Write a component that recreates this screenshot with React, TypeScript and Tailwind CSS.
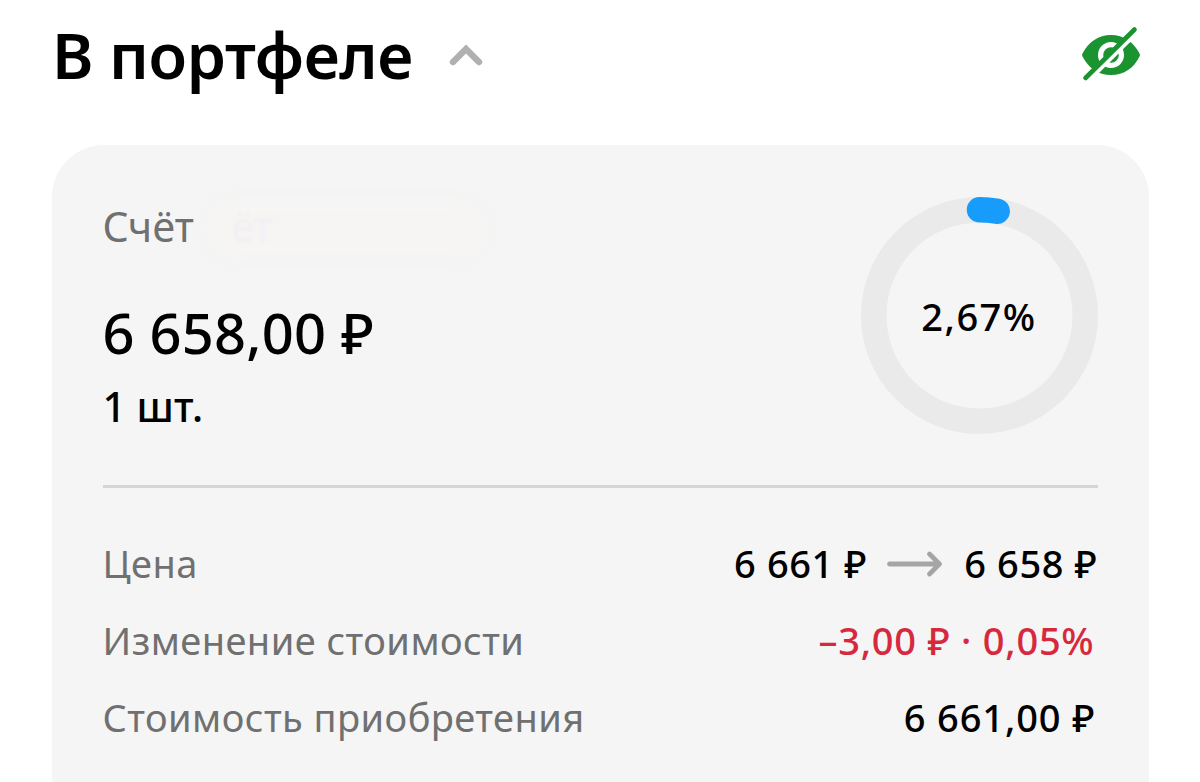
const FONT = { fontFamily: '"Noto Sans", "Open Sans", sans-serif' };

function EyeOff() {
  return (
    <svg width="60" height="54" viewBox="0 0 60 54" className="mt-[27px] shrink-0 overflow-visible">
      <path d="M1.500 26.500C7.500 15 17.500 8 30 8S53 15.500 58.500 26.500Q59.500 28 58.500 29.500C53 41 43 48 30 48S7.500 41 1.500 29.500Q0.500 28 1.500 26.500Z" fill="#1b9330" />
      <circle cx="30" cy="28" r="10.400" fill="#1b9330" stroke="#fff" strokeWidth="5.200" />
      <path d="M6.500 54L58 3" stroke="#fff" strokeWidth="4.600" />
      <path d="M4.500 51L53.500 2.500" stroke="#1b9330" strokeWidth="4.600" strokeLinecap="round" />
    </svg>
  );
}

function ShareRing() {
  return (
    <div className="relative grid size-[237px] shrink-0 place-items-center">
      <svg width="237" height="237" viewBox="0 0 237 237" className="absolute inset-0" fill="none">
        <circle cx="118.500" cy="118.500" r="105.750" stroke="#eaeaea" strokeWidth="25.500" />
        <path d="M118.500 12.750A105.750 105.750 0 0 1 136.200 14.240" stroke="#179cfb" strokeWidth="25.500" strokeLinecap="round" />
      </svg>
      <span className="relative text-[38px] font-medium leading-[52px] tracking-[1.500px]">2,67%</span>
    </div>
  );
}

export default function App() {
  return (
    <div className="flex h-[782px] w-[1200px] flex-col overflow-hidden bg-white text-black" style={FONT}>
      <header className="flex h-[145px] shrink-0 items-start pl-[52px] pr-[59px]">
        <h1 className="whitespace-nowrap text-[63px] font-semibold leading-[109px] tracking-[-0.400px]">В портфеле</h1>
        <svg width="34" height="24" viewBox="0 0 34 24" className="ml-[36px] mt-[43px]" fill="none" stroke="#b0b0b0" strokeWidth="6.500" strokeLinecap="round">
          <path d="M4 19L17 6L30 19" />
        </svg>
        <div className="ml-auto"><EyeOff /></div>
      </header>
      <main className="mx-[51.500px] h-[700px] shrink-0 rounded-[52px] bg-[#f5f5f5] px-[51px]">
        <section className="flex h-[340px] justify-between pt-[52px]">
          <div className="flex flex-col whitespace-nowrap pt-[3px]">
            <div className="relative flex text-[41px] leading-[52px] text-[#707070]">
              <span className="tracking-[0.200px]">Счёт</span>
              <span className="absolute left-[102px] top-0 h-[58px] w-[282px] rounded-full bg-[#f6f5f4] blur-[6px]" />
              <span className="absolute left-[129px] top-0 text-[#f0f0f2] blur-[1px]">ёт</span>
            </div>
            <span className="mt-[46px] text-[56px] font-medium leading-[68px] tracking-[0.200px]">6 658,00 ₽</span>
            <span className="mt-[14px] text-[41px] font-medium leading-[52px]">1 шт.</span>
          </div>
          <ShareRing />
        </section>
        <div className="h-[3px] bg-[#d5d5d5]" />
        <dl className="flex flex-col whitespace-nowrap pt-[37px] text-[38px] leading-[77px]">
          <div className="flex justify-between">
            <dt className="tracking-[0.450px] text-[#707070]">Цена</dt>
            <dd className="flex items-center font-medium tracking-[0.600px]">
              <span>6 661 ₽</span>
              <svg width="56" height="28" viewBox="0 0 56 28" className="ml-[20px] mr-[21px] mt-px" fill="none" stroke="#a5a5a5" strokeWidth="4.800" strokeLinecap="round" strokeLinejoin="round">
                <path d="M2.500 14H52M42.500 4L52.500 14L42.500 24" />
              </svg>
              <span>6 658 ₽</span>
            </dd>
          </div>
          <div className="flex justify-between">
            <dt className="tracking-[0.450px] text-[#707070]">Изменение стоимости</dt>
            <dd className="pr-[3px] font-medium tracking-[0.750px] text-[#d6293e]">–3,00 ₽ · 0,05%</dd>
          </div>
          <div className="flex justify-between">
            <dt className="tracking-[0.450px] text-[#707070]">Стоимость приобретения</dt>
            <dd className="pr-[2px] font-medium tracking-[0.900px]">6 661,00 ₽</dd>
          </div>
        </dl>
      </main>
    </div>
  );
}
